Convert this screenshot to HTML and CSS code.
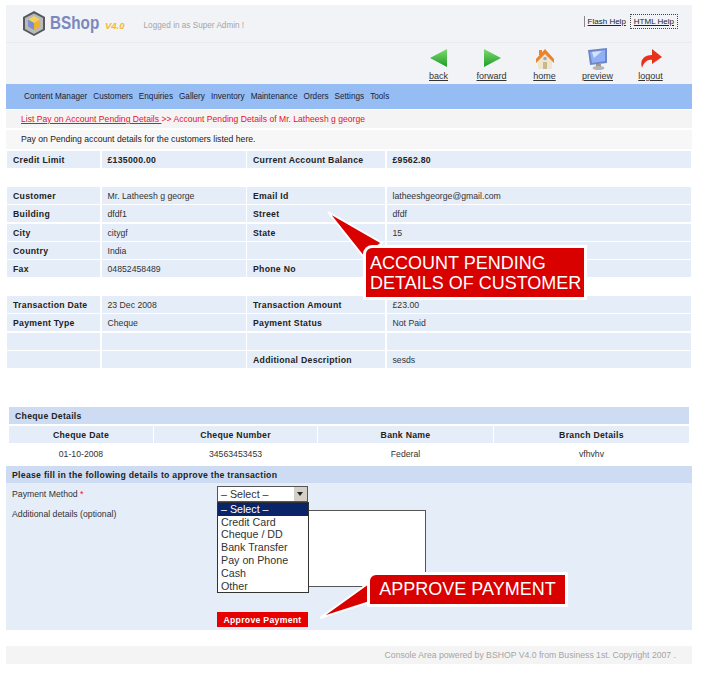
FILE: index.html
```html
<!DOCTYPE html>
<html>
	<head>
		<title>BShop V4.0</title>
		<link rel="stylesheet" href="styles.css">
	</head>
	<body>
		<div class="page">
			<div class="header">
				<svg class="logo-mark" width="24" height="27" viewBox="0 0 24 27">
					<polygon points="12,1 23,7 23,20 12,26 1,20 1,7" fill="#55585c"/>
					<polygon points="12,3.5 21,8 21,19 12,24 3,19 3,8" fill="#b9b9b9"/>
					<polygon points="12,6 18,9.5 12,13 6,9.5" fill="#f5d35a"/>
					<polygon points="6,9.5 12,13 12,20 6,16.5" fill="#7d8fd0"/>
					<polygon points="18,9.5 12,13 12,20 18,16.5" fill="#f0b429"/>
				</svg>
				<span class="logo-text">BShop</span>
				<span class="logo-version">V4.0</span>
				<span class="logged-in">Logged in as Super Admin !</span>
				<div class="help-links">
					<a class="help-flash">Flash Help</a>
					<a class="help-html">HTML Help</a>
				</div>
			</div>
			<div class="toolbar">
				<a class="tool">
					<svg width="20" height="22" viewBox="0 0 20 22"><defs><linearGradient id="gb" x1="0" y1="0" x2="0" y2="1"><stop offset="0" stop-color="#7edb6e"/><stop offset="1" stop-color="#1d9c28"/></linearGradient></defs><polygon points="1,10 18,1 18,19" fill="url(#gb)"/></svg>
					<span>back</span>
				</a>
				<a class="tool">
					<svg width="20" height="22" viewBox="0 0 20 22"><defs><linearGradient id="gf" x1="0" y1="0" x2="0" y2="1"><stop offset="0" stop-color="#7edb6e"/><stop offset="1" stop-color="#1d9c28"/></linearGradient></defs><polygon points="19,10 2,1 2,19" fill="url(#gf)"/></svg>
					<span>forward</span>
				</a>
				<a class="tool">
					<svg width="20" height="22" viewBox="0 0 20 22">
						<polygon points="3,11 10,4 17,11 17,21 3,21" fill="#efe6cf"/>
						<rect x="8" y="14" width="4" height="7" fill="#c9b98d"/>
						<rect x="8.5" y="9" width="3" height="3" fill="#8fa8dd"/>
						<polygon points="1,11 10,1 19,11 19,15 10,6 1,15" fill="#e8842c"/>
						<rect x="4" y="2" width="3" height="5" fill="#e8842c"/>
					</svg>
					<span>home</span>
				</a>
				<a class="tool">
					<svg width="22" height="24" viewBox="0 0 22 24">
						<polygon points="1,3 20,1 20,16 3,18" fill="#6f86c9"/>
						<polygon points="3,5 18,3 18,14 5,16" fill="#8fb0f5"/>
						<polygon points="5,5 15,4 7,11" fill="#d5e2fb"/>
						<rect x="9" y="17" width="5" height="3" fill="#9a9a9a"/>
						<ellipse cx="11.5" cy="21" rx="6" ry="2" fill="#b5b5b5"/>
					</svg>
					<span>preview</span>
				</a>
				<a class="tool">
					<svg width="24" height="22" viewBox="0 0 24 22">
						<path d="M3 20 C0 11 6 7 13 7 L13 1 L23 9 L13 16 L13 12 C9 11 5 14 3 20 Z" fill="#e8321c"/>
					</svg>
					<span>logout</span>
				</a>
			</div>
			<div class="nav">
				<a>Content Manager</a>
				<a>Customers</a>
				<a>Enquiries</a>
				<a>Gallery</a>
				<a>Inventory</a>
				<a>Maintenance</a>
				<a>Orders</a>
				<a>Settings</a>
				<a>Tools</a>
			</div>
			<div class="crumb"><a>List Pay on Account Pending Details </a>&gt;&gt; Account Pending Details of Mr. Latheesh g george</div>
			<div class="desc">Pay on Pending account details for the customers listed here.</div>

			<div class="info-grid">
				<b>Credit Limit</b><b>&pound;135000.00</b><b>Current Account Balance</b><b>&pound;9562.80</b>
			</div>

			<div class="info-grid">
				<b>Customer</b><span>Mr. Latheesh g george</span><b>Email Id</b><span>latheeshgeorge@gmail.com</span>
				<b>Building</b><span>dfdf1</span><b>Street</b><span>dfdf</span>
				<b>City</b><span>citygf</span><b>State</b><span>15</span>
				<b>Country</b><span>India</span><b></b><span></span>
				<b>Fax</b><span>04852458489</span><b>Phone No</b><span></span>
			</div>

			<div class="info-grid">
				<b>Transaction Date</b><span>23 Dec 2008</span><b>Transaction Amount</b><span>&pound;23.00</span>
				<b>Payment Type</b><span>Cheque</span><b>Payment Status</b><span>Not Paid</span>
				<b></b><span></span><b></b><span></span>
				<b></b><span></span><b>Additional Description</b><span>sesds</span>
			</div>

			<div class="cheque">
				<div class="cheque-title">Cheque Details</div>
				<div class="cheque-grid">
					<b>Cheque Date</b><b>Cheque Number</b><b>Bank Name</b><b>Branch Details</b>
					<span>01-10-2008</span><span>34563453453</span><span>Federal</span><span>vfhvhv</span>
				</div>
			</div>

			<div class="approve">
				<div class="approve-title">Please fill in the following details to approve the transaction</div>
				<div class="approve-body">
					<div class="labels">
						<div>Payment Method <i>*</i></div>
						<div class="label-extra">Additional details (optional)</div>
					</div>
					<div class="fields">
						<div class="select-box"><span>&ndash; Select &ndash;</span><em></em></div>
						<div class="text-box"></div>
						<ul class="select-list">
							<li class="on">&ndash; Select &ndash;</li>
							<li>Credit Card</li>
							<li>Cheque / DD</li>
							<li>Bank Transfer</li>
							<li>Pay on Phone</li>
							<li>Cash</li>
							<li>Other</li>
						</ul>
						<div class="approve-btn">Approve Payment</div>
					</div>
				</div>
			</div>

			<div class="footer">Console Area powered by BSHOP V4.0 from Business 1st. Copyright 2007 .</div>

			<svg class="pointer pointer-account" width="60" height="50" viewBox="0 0 60 50"><polygon points="2,3 56,34 37,47" fill="#d90000" stroke="#fff" stroke-width="2"/></svg>
			<div class="callout callout-account">ACCOUNT PENDING<br>DETAILS OF CUSTOMER</div>
			<svg class="pointer pointer-approve" width="60" height="50" viewBox="0 0 60 50"><polygon points="1,45 54,7 54,28" fill="#d90000" stroke="#fff" stroke-width="2"/></svg>
			<div class="callout callout-approve">APPROVE PAYMENT</div>
		</div>
	</body>
</html>
```

FILE: styles.css
```css
html {
	background-color: white;
}
body {
	margin: 0px;
	font-family: "Liberation Sans", Arial, sans-serif;
	font-size: 8.7px;
	color: #333333;
}
.page {
	position: relative;
	width: 686px;
	height: 675px;
	margin-left: 6px;
	padding-top: 5px;
}
.header {
	display: flex;
	align-items: center;
	height: 37px;
	padding-left: 16px;
	padding-right: 14px;
	background-color: #f1f3f7;
	border-bottom: 1px solid #e9ebef;
}
.logo-mark {
	margin-right: 4px;
}
.logo-text {
	display: inline-block;
	width: 49px;
	font-size: 18px;
	font-weight: bold;
	color: #7c88bd;
	transform: scaleX(0.85);
	transform-origin: left;
}
.logo-version {
	margin-left: 6px;
	margin-top: 3px;
	font-size: 9.5px;
	font-weight: bold;
	font-style: italic;
	color: #f7b92f;
}
.logged-in {
	margin-left: 19px;
	margin-top: 3px;
	font-size: 8.2px;
	color: #a5a5a5;
}
.help-links {
	display: flex;
	align-items: center;
	margin-left: auto;
	margin-top: -4px;
	font-size: 8px;
	color: #222222;
	text-decoration: underline;
}
.help-flash {
	padding: 1px 4px 1px 3px;
	border-left: 1px solid #888888;
}
.help-html {
	padding: 2px 3px;
	border: 1px dotted #444444;
}
.toolbar {
	display: flex;
	justify-content: flex-end;
	height: 41px;
	padding-right: 15px;
	background-color: #f1f3f7;
}
.tool {
	display: flex;
	flex-direction: column;
	align-items: center;
	width: 53px;
	padding-top: 4px;
	font-size: 9px;
	color: #333333;
}
.tool svg {
	height: 24px;
}
.tool span {
	margin-top: 0px;
	text-decoration: underline;
}
.nav {
	display: flex;
	gap: 6px;
	align-items: center;
	height: 25px;
	padding-left: 18px;
	background-color: #95bcf3;
	font-size: 8.2px;
	color: #1b2433;
}
.crumb {
	height: 18px;
	margin-top: 1px;
	padding-left: 15px;
	background-color: #f4f4f4;
	font-size: 8.6px;
	line-height: 19px;
	color: #e8102a;
}
.crumb a {
	text-decoration: underline;
}
.desc {
	height: 19px;
	margin-top: 2px;
	padding-left: 15px;
	background-color: #f7f7f7;
	font-size: 8.65px;
	line-height: 19px;
	color: #222222;
}
.info-grid {
	display: grid;
	grid-template-columns: 93px 144px 138px 304px;
	grid-auto-rows: 17px;
	column-gap: 1.5px;
	row-gap: 1.25px;
	margin-top: 2px;
	margin-left: 1px;
	margin-bottom: 19px;
}
.info-grid b,
.info-grid span {
	padding-left: 6px;
	background-color: #e5edf9;
	line-height: 19px;
	white-space: nowrap;
}
.info-grid b {
	font-weight: bold;
	letter-spacing: 0.28px;
	color: #222222;
}
.cheque {
	width: 680px;
	margin-top: 39px;
	margin-left: 3px;
}
.cheque-title {
	height: 17px;
	padding-left: 6px;
	background-color: #cddcf3;
	font-weight: bold;
	line-height: 19px;
	letter-spacing: 0.28px;
	color: #222222;
}
.cheque-grid {
	display: grid;
	grid-template-columns: 144px 163px 175px 195px;
	grid-template-rows: 17px 23px;
	column-gap: 1px;
	margin-top: 2px;
	text-align: center;
}
.cheque-grid b {
	background-color: #e5edf9;
	line-height: 19px;
	letter-spacing: 0.28px;
	color: #222222;
}
.cheque-grid span {
	line-height: 23px;
}
.approve-title {
	height: 17px;
	padding-left: 6px;
	background-color: #cddcf3;
	font-weight: bold;
	line-height: 18px;
	letter-spacing: 0.28px;
	color: #222222;
}
.approve-body {
	display: flex;
	height: 147px;
	background-color: #e5edf9;
}
.labels {
	width: 211px;
	padding-top: 6px;
	padding-left: 6px;
	box-sizing: border-box;
}
.labels i {
	font-style: normal;
	color: #e8102a;
}
.label-extra {
	margin-top: 10px;
}
.fields {
	position: relative;
	flex: 1;
}
.select-box {
	display: flex;
	justify-content: space-between;
	width: 91px;
	height: 16px;
	margin-top: 3px;
	box-sizing: border-box;
	border: 1px solid #555555;
	background-color: white;
	font-size: 10.7px;
	line-height: 14px;
	padding-left: 3px;
}
.select-box em {
	position: relative;
	width: 13px;
	background-color: #d4d0c8;
}
.select-box em::after {
	content: "";
	position: absolute;
	left: 3px;
	top: 5px;
	border-left: 3px solid transparent;
	border-right: 3px solid transparent;
	border-top: 4px solid #222222;
}
.text-box {
	width: 209px;
	height: 77px;
	margin-top: 8px;
	box-sizing: border-box;
	border: 1px solid #555555;
	background-color: white;
}
.select-list {
	position: absolute;
	left: 0px;
	top: 19px;
	width: 92px;
	margin: 0px;
	padding: 0px;
	box-sizing: border-box;
	list-style: none;
	border: 1px solid #333333;
	background-color: white;
	font-size: 10.7px;
	line-height: 12.8px;
}
.select-list li {
	padding-left: 3px;
}
.select-list .on {
	background-color: #0a246a;
	color: white;
}
.approve-btn {
	width: 91px;
	height: 15px;
	margin-top: 25px;
	background-color: #e60000;
	color: white;
	font-weight: bold;
	text-align: center;
	line-height: 16px;
	letter-spacing: 0.28px;
}
.footer {
	height: 18px;
	margin-top: 16px;
	padding-right: 16px;
	background-color: #f4f4f4;
	font-size: 8.67px;
	line-height: 18px;
	text-align: right;
	color: #a5a5a5;
}
.callout {
	position: absolute;
	border: 3px solid white;
	background-color: #d90000;
	color: white;
	font-size: 18px;
	white-space: nowrap;
	border-top-left-radius: 9px;
}
.callout-account {
	left: 357px;
	top: 245px;
	width: 214px;
	height: 44px;
	padding-left: 4px;
	padding-top: 5px;
	line-height: 20px;
}
.callout-approve {
	left: 361px;
	top: 572px;
	width: 195px;
	height: 29px;
	line-height: 29px;
	text-align: center;
}
.pointer {
	position: absolute;
}
.pointer-account {
	left: 320px;
	top: 209px;
}
.pointer-approve {
	left: 313px;
	top: 573px;
}
```
